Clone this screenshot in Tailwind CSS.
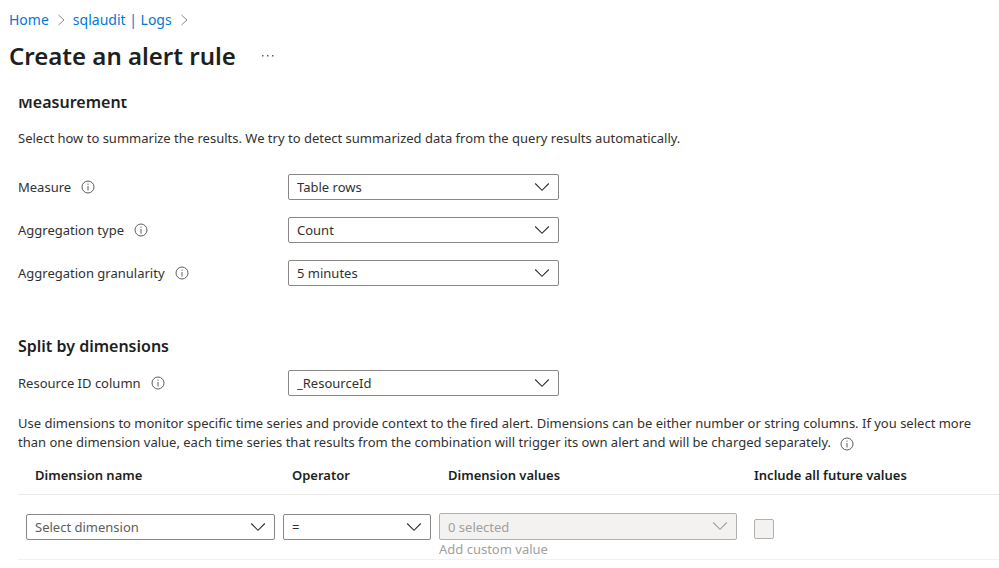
<!DOCTYPE html>
<html lang="en">
<head>
    <meta charset="UTF-8" />
    <meta name="viewport" content="width=device-width, initial-scale=1" />
    <title>Create an alert rule</title>
    <script src="https://cdn.jsdelivr.net/npm/@tailwindcss/browser@4"></script>
</head>
<body class="bg-white text-[#323130] font-['Noto_Sans',sans-serif] text-[13px] leading-5">
    <!-- Shared icons -->
    <svg class="hidden" aria-hidden="true">
        <symbol id="info" viewBox="0 0 14 14">
            <circle cx="7" cy="7" r="6" fill="none" stroke="currentColor" />
            <path d="M7 6v4.5M7 3.6v1.2" fill="none" stroke="currentColor" />
        </symbol>
        <symbol id="down" viewBox="0 0 16 10">
            <path d="M1.2 1.5 8 8.3l6.800-6.800" fill="none" stroke="currentColor" stroke-width="1.1" />
        </symbol>
        <symbol id="right" viewBox="0 0 8 12">
            <path d="M1.500 1 7 6l-5.500 5" fill="none" stroke="currentColor" />
        </symbol>
    </svg>

    <header class="px-[9px] pt-2.5">
        <nav aria-label="Breadcrumb" class="flex items-center text-[14px] leading-5 text-[#0078d4]">
            <a href="#" class="hover:underline">Home</a>
            <svg class="mx-2 h-3 w-2 text-[#8a8886]"><use href="#right" /></svg>
            <a href="#" class="hover:underline">sqlaudit | Logs</a>
            <svg class="mx-2 h-3 w-2 text-[#8a8886]"><use href="#right" /></svg>
        </nav>
        <div class="flex items-center gap-6 pt-2">
            <h1 class="text-2xl leading-9 font-semibold text-[#201f1e]">Create an alert rule</h1>
            <button type="button" aria-label="More options" class="flex h-5 w-4 items-center text-[#605e5c]">
                <svg class="h-1 w-4" viewBox="0 0 16 4" fill="currentColor"><path d="M2 1h1.500v1.500H2zM7 1h1.500v1.500H7zM12 1h1.500v1.500H12z" /></svg>
            </button>
        </div>
    </header>

    <!-- Scrolled content, the first heading sits partly under the header -->
    <main class="mt-[25px] overflow-hidden pl-[18px]">
        <section>
            <h2 class="-mt-[9px] text-base leading-6 font-semibold text-[#201f1e]">Measurement</h2>
            <p class="mt-3.5 mb-[26px]">Select how to summarize the results. We try to detect summarized data from the query results automatically.</p>

            <div class="grid grid-cols-[270px_271px] items-center gap-y-[17px]">
                <div class="flex items-center gap-2.5">
                    <label for="measure">Measure</label>
                    <svg class="size-3.5 text-[#605e5c]"><use href="#info" /></svg>
                </div>
                <div class="relative">
                    <select id="measure" class="block h-[26px] w-full appearance-none rounded-xs border border-[#8a8886] bg-white pr-8 pl-2">
                        <option>Table rows</option>
                    </select>
                    <svg class="pointer-events-none absolute top-2 right-[9px] h-2.5 w-4"><use href="#down" /></svg>
                </div>

                <div class="flex items-center gap-2.5">
                    <label for="aggType">Aggregation type</label>
                    <svg class="size-3.5 text-[#605e5c]"><use href="#info" /></svg>
                </div>
                <div class="relative">
                    <select id="aggType" class="block h-[26px] w-full appearance-none rounded-xs border border-[#8a8886] bg-white pr-8 pl-2">
                        <option>Count</option>
                    </select>
                    <svg class="pointer-events-none absolute top-2 right-[9px] h-2.5 w-4"><use href="#down" /></svg>
                </div>

                <div class="flex items-center gap-2.5">
                    <label for="granularity">Aggregation granularity</label>
                    <svg class="size-3.5 text-[#605e5c]"><use href="#info" /></svg>
                </div>
                <div class="relative">
                    <select id="granularity" class="block h-[26px] w-full appearance-none rounded-xs border border-[#8a8886] bg-white pr-8 pl-2">
                        <option>5 minutes</option>
                    </select>
                    <svg class="pointer-events-none absolute top-2 right-[9px] h-2.5 w-4"><use href="#down" /></svg>
                </div>
            </div>
        </section>

        <section class="mt-12">
            <h2 class="text-base leading-6 font-semibold text-[#201f1e]">Split by dimensions</h2>
            <div class="mt-3 grid grid-cols-[270px_271px] items-center">
                <div class="flex items-center gap-2.5">
                    <label for="resourceId">Resource ID column</label>
                    <svg class="size-3.5 text-[#605e5c]"><use href="#info" /></svg>
                </div>
                <div class="relative">
                    <select id="resourceId" class="block h-[26px] w-full appearance-none rounded-xs border border-[#8a8886] bg-white pr-8 pl-2">
                        <option>_ResourceId</option>
                    </select>
                    <svg class="pointer-events-none absolute top-2 right-[9px] h-2.5 w-4"><use href="#down" /></svg>
                </div>
            </div>

            <p class="mt-[18px] pr-2 leading-[19px]">
                Use dimensions to monitor specific time series and provide context to the fired alert. Dimensions can be either number or string columns. If you select more
                than one dimension value, each time series that results from the combination will trigger its own alert and will be charged separately.
                <svg class="ml-1.5 inline size-3.5 text-[#605e5c]"><use href="#info" /></svg>
            </p>

            <table class="mt-[13px] w-full table-fixed text-left">
                <thead>
                    <tr class="border-b border-[#edebe9] text-[#201f1e]">
                        <th class="w-[257px] pb-[9px] pl-[17px] font-semibold">Dimension name</th>
                        <th class="w-[156px] pb-[9px] pl-[17px] font-semibold">Operator</th>
                        <th class="w-[306px] pb-[9px] pl-[17px] font-semibold">Dimension values</th>
                        <th class="pb-[9px] pl-[17px] font-semibold">Include all future values</th>
                    </tr>
                </thead>
                <tbody>
                    <tr class="border-b border-[#f3f2f1] align-top">
                        <td class="pt-[19px] pl-2">
                            <div class="relative">
                                <select aria-label="Dimension name" class="block h-[26px] w-full appearance-none rounded-xs border border-[#8a8886] bg-white pr-8 pl-2 text-[#605e5c]">
                                    <option>Select dimension</option>
                                </select>
                                <svg class="pointer-events-none absolute top-2 right-[9px] h-2.5 w-4"><use href="#down" /></svg>
                            </div>
                        </td>
                        <td class="pt-[19px] pl-2">
                            <div class="relative">
                                <select aria-label="Operator" class="block h-[26px] w-full appearance-none rounded-xs border border-[#8a8886] bg-white pr-8 pl-2">
                                    <option>=</option>
                                </select>
                                <svg class="pointer-events-none absolute top-2 right-[9px] h-2.5 w-4"><use href="#down" /></svg>
                            </div>
                        </td>
                        <td class="pt-[18px] pl-2 text-[#a19f9d]">
                            <div class="relative">
                                <select aria-label="Dimension values" disabled class="block h-[27px] w-full appearance-none rounded-xs border border-[#b3b0ad] bg-[#f3f2f1] pr-8 pl-2 opacity-100">
                                    <option>0 selected</option>
                                </select>
                                <svg class="pointer-events-none absolute top-2 right-[9px] h-2.5 w-4"><use href="#down" /></svg>
                            </div>
                            <button type="button" disabled class="block leading-[19px]">Add custom value</button>
                        </td>
                        <td class="pt-6 pl-[17px]">
                            <input type="checkbox" aria-label="Include all future values" disabled class="block size-5 appearance-none rounded-xs border border-[#b3b0ad] bg-[#f3f2f1]" />
                        </td>
                    </tr>
                </tbody>
            </table>
        </section>
    </main>
</body>
</html>
